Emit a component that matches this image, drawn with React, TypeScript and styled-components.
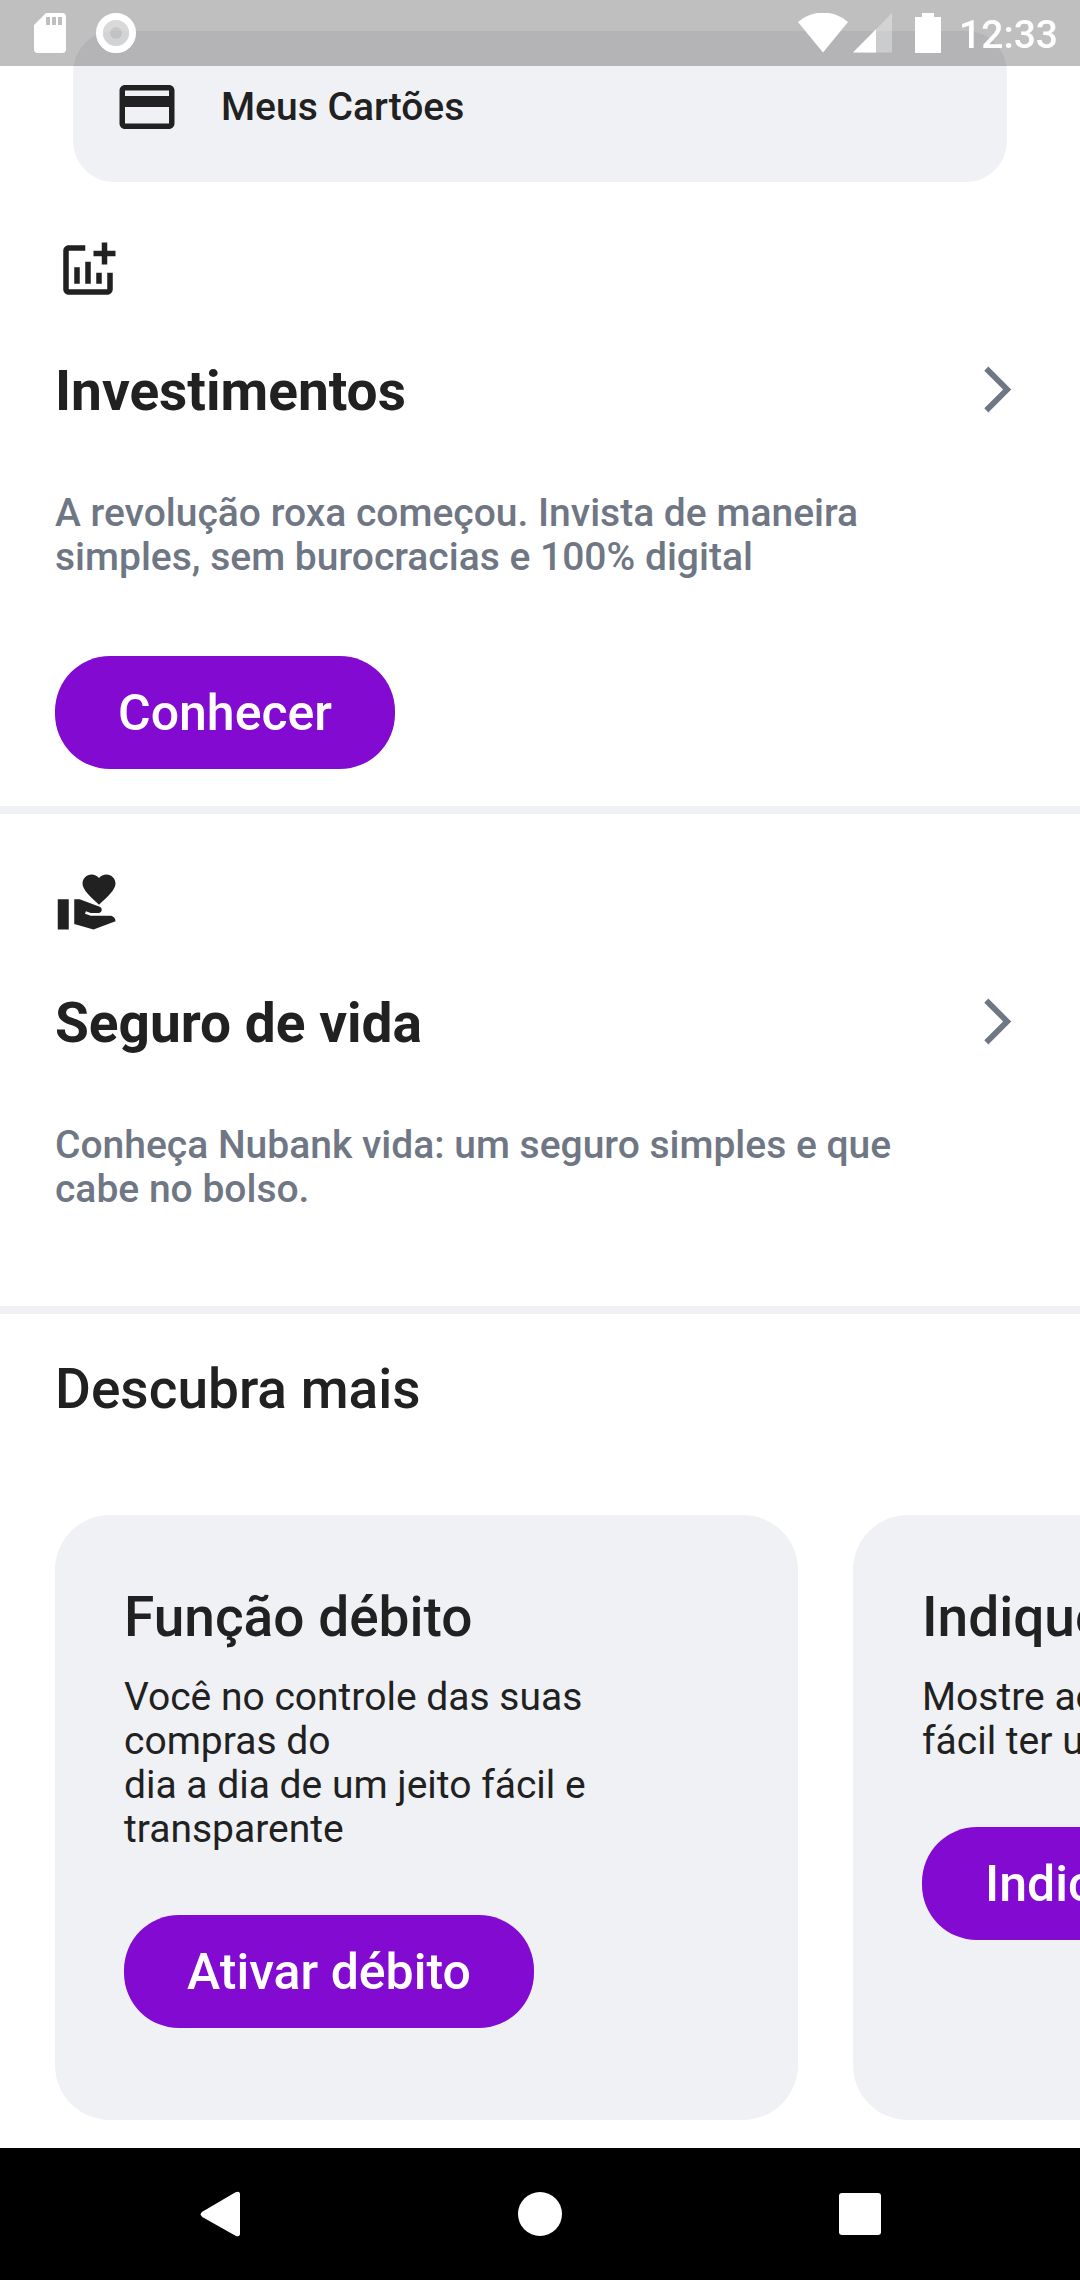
import React from "react";
import styled, { createGlobalStyle } from "styled-components";
import { MdAddchart, MdVolunteerActivism } from "react-icons/md";

const color = {
  ink: "#212121",
  muted: "#6f7684",
  surface: "#f0f1f5",
  brand: "#820ad1",
  page: "#ffffff",
};

const GlobalStyle = createGlobalStyle`
  *, *::before, *::after { box-sizing: border-box; }
  body {
    margin: 0;
    background: ${color.page};
    color: ${color.ink};
    font-family: Roboto, "Liberation Sans", sans-serif;
  }
  h2, h3, p { margin: 0; }
  button { font-family: inherit; border: 0; cursor: pointer; }
  svg { display: block; flex: none; }
`;

const Screen = styled.div`
  display: flex;
  flex-direction: column;
  min-height: 100vh;
`;

const StatusBar = styled.header`
  position: fixed;
  top: 0;
  left: 0;
  right: 0;
  z-index: 2;
  display: flex;
  align-items: center;
  justify-content: space-between;
  height: 66px;
  padding: 0 22px 0 34px;
  background: rgba(0, 0, 0, 0.25);
  color: #fff;
`;

const StatusGroup = styled.div<{ $gap: number }>`
  display: flex;
  align-items: center;
  gap: ${(p) => p.$gap}px;
`;

const Clock = styled.time`
  padding-top: 3px;
  font-size: 39px;
  line-height: 44px;
  font-weight: 500;
`;

const Content = styled.main`
  flex: 1;
  padding-top: 31px;
`;

const CardsShortcut = styled.div`
  padding: 0 73px;
`;

const ShortcutButton = styled.button`
  display: flex;
  align-items: center;
  gap: 41px;
  width: 100%;
  height: 151px;
  padding: 0 41px;
  border-radius: 41px;
  background: ${color.surface};
  color: ${color.ink};
  font-size: 39px;
  line-height: 44px;
  font-weight: 500;
`;

const Section = styled.section<{ $bottom: number }>`
  padding: 55px 55px ${(p) => p.$bottom}px;
  border-bottom: 8px solid ${color.surface};
`;

const SectionHead = styled.div`
  display: flex;
  align-items: flex-start;
  justify-content: space-between;
  margin: 56px 0 67px;
`;

const SectionTitle = styled.h2`
  font-size: 55px;
  line-height: 65px;
  font-weight: 700;
`;

const OpenButton = styled.button`
  padding: 3px 0 0;
  background: none;
  color: ${color.muted};
`;

const SectionText = styled.p`
  max-width: 880px;
  color: ${color.muted};
  font-size: 39px;
  line-height: 44px;
  font-weight: 500;
`;

const PillButton = styled.button<{ $top: number }>`
  display: block;
  height: 113px;
  margin-top: ${(p) => p.$top}px;
  padding: 0 63px;
  border-radius: 55px;
  background: ${color.brand};
  color: #fff;
  font-size: 50px;
  font-weight: 500;
  white-space: nowrap;
`;

const Discover = styled.section`
  padding: 43px 0 28px;
`;

const DiscoverTitle = styled.h2`
  padding: 0 55px;
  font-size: 55px;
  line-height: 64px;
  font-weight: 500;
`;

const Carousel = styled.div`
  display: flex;
  gap: 55px;
  margin-top: 94px;
  padding: 0 55px;
  overflow-x: auto;
  scrollbar-width: none;
`;

const Card = styled.article`
  flex: 0 0 743px;
  padding: 70px 69px 92px;
  border-radius: 55px;
  background: ${color.surface};
`;

const CardTitle = styled.h3`
  font-size: 55px;
  line-height: 64px;
  font-weight: 500;
`;

const CardText = styled.p`
  max-width: 520px;
  margin-top: 26px;
  font-size: 39px;
  line-height: 44px;
  white-space: pre-line;
`;

const NavBar = styled.nav`
  position: sticky;
  bottom: 0;
  display: flex;
  height: 132px;
  padding: 0 60px;
  background: #000;
`;

const NavButton = styled.button`
  flex: 1;
  display: flex;
  align-items: center;
  justify-content: center;
  padding: 0;
  background: none;
  color: #fff;
`;

const SdCardIcon = () => (
  <svg width="32" height="40" viewBox="0 0 32 40" aria-hidden="true">
    <path
      fill="currentColor"
      fillRule="evenodd"
      d="M12 0H28a4 4 0 0 1 4 4V36a4 4 0 0 1-4 4H4a4 4 0 0 1-4-4V12ZM12 4v8h4V4ZM18 4v8h4V4ZM24 4v8h4V4Z"
    />
  </svg>
);

const RecordIcon = () => (
  <svg width="40" height="40" viewBox="0 0 40 40" aria-hidden="true">
    <circle cx="20" cy="20" r="13" fill="#fff" fillOpacity="0.4" />
    <circle cx="20" cy="20" r="6" fill="#000" fillOpacity="0.08" />
    <circle cx="20" cy="20" r="16.5" fill="none" stroke="#fff" strokeWidth="7" />
  </svg>
);

const WifiIcon = () => (
  <svg width="50" height="40" viewBox="0 0 50 40" aria-hidden="true">
    <path fill="currentColor" d="M25 39.5 0 9A38 38 0 0 1 50 9Z" />
  </svg>
);

const SignalIcon = () => (
  <svg width="39" height="40" viewBox="0 0 39 40" aria-hidden="true">
    <path fill="#fff" fillOpacity="0.3" d="M39 0V39.5H0Z" />
    <path fill="#fff" d="M23 16.2V39.5H0Z" />
  </svg>
);

const BatteryIcon = () => (
  <svg width="26" height="40" viewBox="0 0 26 40" aria-hidden="true">
    <path fill="currentColor" d="M7 0h12v4h7v36H0V4h7Z" />
  </svg>
);

const CreditCardIcon = () => (
  <svg width="66" height="66" viewBox="0 0 24 24" aria-hidden="true">
    <path
      fill="currentColor"
      d="M20 4H4c-1.11 0-1.99.89-1.99 2L2 18c0 1.11.89 2 2 2h16c1.11 0 2-.89 2-2V6c0-1.11-.89-2-2-2zm0 14H4v-6h16v6zm0-10H4V6h16v2z"
    />
  </svg>
);

const ChevronIcon = () => (
  <svg width="55" height="55" viewBox="0 0 24 24" aria-hidden="true">
    <path fill="currentColor" d="M6.23 20.23 8 22l10-10L8 2 6.23 3.77 14.46 12z" />
  </svg>
);

const BackIcon = () => (
  <svg width="46" height="46" viewBox="0 0 46 46" aria-hidden="true">
    <path
      fill="currentColor"
      d="M5.3 20.8 38.5 1.3Q43 -0.5 43 3.5V42.5Q43 46.5 38.5 44.7L5.3 25.9Q2 23.300 5.3 20.8Z"
    />
  </svg>
);

const HomeIcon = () => (
  <svg width="46" height="46" viewBox="0 0 46 46" aria-hidden="true">
    <circle cx="23" cy="23" r="22" fill="currentColor" />
  </svg>
);

const RecentsIcon = () => (
  <svg width="46" height="46" viewBox="0 0 46 46" aria-hidden="true">
    <rect x="2" y="2" width="42" height="42" rx="3" fill="currentColor" />
  </svg>
);

const sections = [
  {
    title: "Investimentos",
    text: "A revolução roxa começou. Invista de maneira simples, sem burocracias e 100% digital",
    action: "Conhecer",
    icon: <MdAddchart size={66} />,
    bottom: 37,
  },
  {
    title: "Seguro de vida",
    text: "Conheça Nubank vida: um seguro simples e que cabe no bolso.",
    icon: <MdVolunteerActivism size={66} />,
    bottom: 95,
  },
];

const cards = [
  {
    title: "Função débito",
    text: "Você no controle das suas compras do\ndia a dia de um jeito fácil e transparente",
    action: "Ativar débito",
  },
  {
    title: "Indique seus amigos",
    text: "Mostre aos amigos como é\nfácil ter uma vida sem filas",
    action: "Indicar amigos",
  },
];

export default function App() {
  return (
    <>
      <GlobalStyle />
      <Screen>
        <StatusBar>
          <StatusGroup $gap={30}>
            <SdCardIcon />
            <RecordIcon />
          </StatusGroup>
          <StatusGroup $gap={18}>
            <StatusGroup $gap={23}>
              <StatusGroup $gap={5}>
                <WifiIcon />
                <SignalIcon />
              </StatusGroup>
              <BatteryIcon />
            </StatusGroup>
            <Clock>12:33</Clock>
          </StatusGroup>
        </StatusBar>

        <Content>
          <CardsShortcut>
            <ShortcutButton type="button">
              <CreditCardIcon />
              Meus Cartões
            </ShortcutButton>
          </CardsShortcut>

          {sections.map((s) => (
            <Section key={s.title} $bottom={s.bottom}>
              {s.icon}
              <SectionHead>
                <SectionTitle>{s.title}</SectionTitle>
                <OpenButton type="button" aria-label={`Abrir ${s.title}`}>
                  <ChevronIcon />
                </OpenButton>
              </SectionHead>
              <SectionText>{s.text}</SectionText>
              {s.action && (
                <PillButton type="button" $top={77}>
                  {s.action}
                </PillButton>
              )}
            </Section>
          ))}

          <Discover>
            <DiscoverTitle>Descubra mais</DiscoverTitle>
            <Carousel>
              {cards.map((c) => (
                <Card key={c.title}>
                  <CardTitle>{c.title}</CardTitle>
                  <CardText>{c.text}</CardText>
                  <PillButton type="button" $top={64}>
                    {c.action}
                  </PillButton>
                </Card>
              ))}
            </Carousel>
          </Discover>
        </Content>

        <NavBar>
          <NavButton type="button" aria-label="Voltar">
            <BackIcon />
          </NavButton>
          <NavButton type="button" aria-label="Início">
            <HomeIcon />
          </NavButton>
          <NavButton type="button" aria-label="Recentes">
            <RecentsIcon />
          </NavButton>
        </NavBar>
      </Screen>
    </>
  );
}
